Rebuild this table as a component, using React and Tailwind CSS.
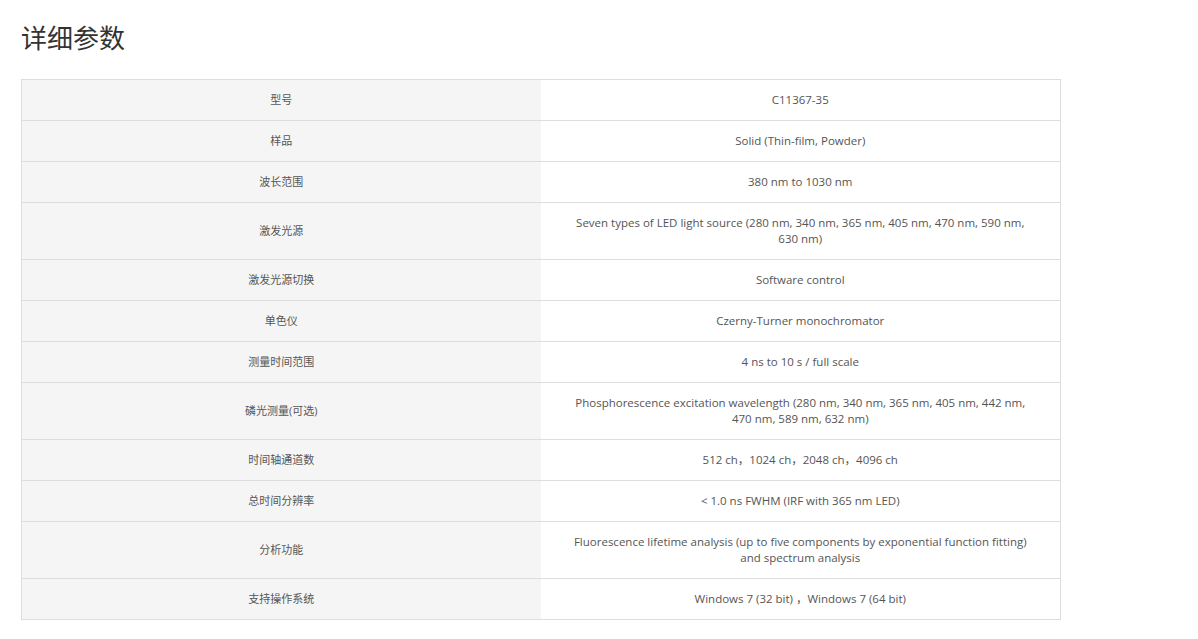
import React from 'react';

const specs = [
    ['型号', 'C11367-35'],
    ['样品', 'Solid (Thin-film, Powder)'],
    ['波长范围', '380 nm to 1030 nm'],
    ['激发光源', 'Seven types of LED light source (280 nm, 340 nm, 365 nm, 405 nm, 470 nm, 590 nm, 630 nm)'],
    ['激发光源切换', 'Software control'],
    ['单色仪', 'Czerny-Turner monochromator'],
    ['测量时间范围', '4 ns to 10 s / full scale'],
    ['磷光测量(可选)', 'Phosphorescence excitation wavelength (280 nm, 340 nm, 365 nm, 405 nm, 442 nm, 470 nm, 589 nm, 632 nm)'],
    ['时间轴通道数', '512 ch，1024 ch，2048 ch，4096 ch'],
    ['总时间分辨率', '< 1.0 ns FWHM (IRF with 365 nm LED)'],
    ['分析功能', 'Fluorescence lifetime analysis (up to five components by exponential function fitting) and spectrum analysis'],
    ['支持操作系统', 'Windows 7 (32 bit) ，Windows 7 (64 bit)'],
];

export default function App() {
    return (
        <div
            className="bg-white min-h-screen px-[21px] pt-[20px]"
            style={{ fontFamily: '"Open Sans", "Noto Sans CJK SC", sans-serif' }}
        >
            <h1 className="text-[26px] leading-[36px] text-[#333] font-normal">详细参数</h1>

            {/* Specs table */}
            <table className="mt-[23px] w-[1040px] border-collapse border border-[#ddd] text-[11.5px] leading-[16px] text-[#555] table-fixed">
                <tbody>
                    {specs.map(([label, value]) => (
                        <tr key={label} className="border-b border-[#ddd]">
                            <td className="w-[519px] bg-[#f5f5f5] text-center py-[12px] px-[30px] text-[11px]">{label}</td>
                            <td className="bg-white text-center py-[12px] px-[32px]">{value}</td>
                        </tr>
                    ))}
                </tbody>
            </table>
        </div>
    );
}
